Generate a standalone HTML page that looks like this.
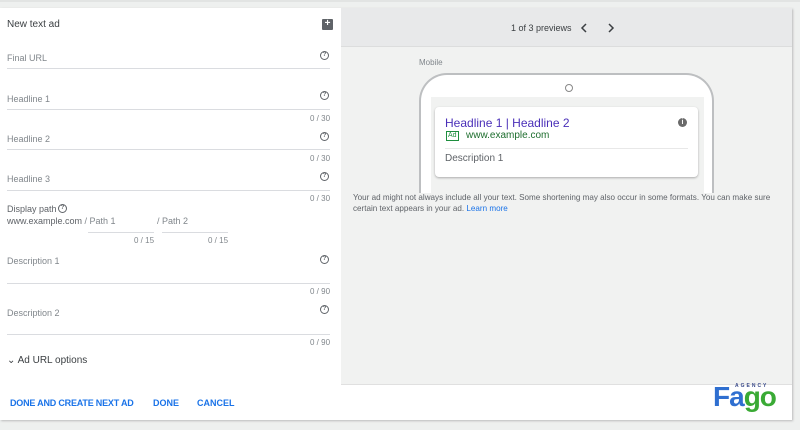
<!DOCTYPE html>
<html><head><style>
*{margin:0;padding:0;box-sizing:border-box}
body{width:800px;height:430px;background:#eef0ef;font-family:"Liberation Sans",sans-serif;position:relative;overflow:hidden}
.a{position:absolute}
.lbl{font-size:9px;color:#80868b}
.q{width:9px;height:9px;border:1px solid #5f6368;border-radius:50%;font-size:6px;line-height:7px;text-align:center;color:#5f6368;font-weight:bold}
.ln{height:1px;background:#dadce0}
.cnt{font-size:8px;color:#80868b}
.btn{font-size:9px;color:#1a73e8;font-weight:bold;top:398px}
</style></head><body>
<div class="a" style="left:0;top:0;width:800px;height:2px;background:#e2e4e3"></div>
<div class="a" style="left:0;top:8px;width:792px;height:412px;background:#fff;box-shadow:1px 1px 2px #bbb"></div>
<div class="a" style="left:341px;top:8px;width:451px;height:377px;background:#f1f2f1"></div>
<div class="a" style="left:341px;top:8px;width:451px;height:39px;background:#e8e9ea;border-bottom:1px solid #dcdddd"></div>
<div class="a" style="left:341px;top:384px;width:451px;height:1px;background:#e0e0e0"></div>

<div class="a" style="left:7px;top:19px;font-size:10px;color:#3c4043">New text ad</div>
<div class="a" style="left:322px;top:19px;width:11px;height:11px;background:#5f6368;border-radius:1px;color:#fff;font-size:10px;line-height:10px;text-align:center;font-weight:bold">+</div>

<div class="a lbl" style="left:7px;top:53px">Final URL</div>
<div class="a q" style="left:320px;top:51px">?</div>
<div class="a ln" style="left:7px;top:68px;width:323px"></div>

<div class="a lbl" style="left:7px;top:94px">Headline 1</div>
<div class="a q" style="left:320px;top:91px">?</div>
<div class="a ln" style="left:7px;top:109px;width:323px"></div>
<div class="a cnt" style="left:310px;top:114px">0 / 30</div>

<div class="a lbl" style="left:7px;top:134px">Headline 2</div>
<div class="a q" style="left:320px;top:132px">?</div>
<div class="a ln" style="left:7px;top:149px;width:323px"></div>
<div class="a cnt" style="left:310px;top:154px">0 / 30</div>

<div class="a lbl" style="left:7px;top:174px">Headline 3</div>
<div class="a q" style="left:320px;top:172px">?</div>
<div class="a ln" style="left:7px;top:190px;width:323px"></div>
<div class="a cnt" style="left:310px;top:194px">0 / 30</div>

<div class="a" style="left:7px;top:204px;font-size:9px;color:#5f6368">Display path</div>
<div class="a q" style="left:58px;top:204px">?</div>
<div class="a" style="left:7px;top:216px;font-size:9px;color:#5f6368">www.example.com <span style="color:#80868b">/ Path 1</span></div>
<div class="a lbl" style="left:157px;top:216px">/ Path 2</div>
<div class="a ln" style="left:88px;top:232px;width:66px"></div>
<div class="a ln" style="left:162px;top:232px;width:66px"></div>
<div class="a cnt" style="left:134px;top:236px">0 / 15</div>
<div class="a cnt" style="left:208px;top:236px">0 / 15</div>

<div class="a lbl" style="left:7px;top:256px">Description 1</div>
<div class="a q" style="left:320px;top:255px">?</div>
<div class="a ln" style="left:7px;top:283px;width:323px"></div>
<div class="a cnt" style="left:310px;top:287px">0 / 90</div>

<div class="a lbl" style="left:7px;top:308px">Description 2</div>
<div class="a q" style="left:320px;top:305px">?</div>
<div class="a ln" style="left:7px;top:334px;width:323px"></div>
<div class="a cnt" style="left:310px;top:338px">0 / 90</div>

<div class="a" style="left:7px;top:355px;font-size:10px;color:#3c4043">⌄ Ad URL options</div>

<div class="a btn" style="left:10px;letter-spacing:-0.2px">DONE AND CREATE NEXT AD</div>
<div class="a btn" style="left:153px">DONE</div>
<div class="a btn" style="left:197px">CANCEL</div>

<div class="a" style="left:735px;top:383px;font-size:5px;letter-spacing:2px;color:#3a4a8a;font-weight:bold">AGENCY</div>
<div class="a" style="left:713px;top:382px;font-size:28px;font-weight:bold;letter-spacing:-1px;line-height:30px"><span style="color:#2f6fd0">F</span><span style="color:#2f6fd0">a</span><span style="color:#3aaa35">go</span></div>

<div class="a" style="left:511px;top:23px;font-size:9px;color:#3c4043">1 of 3 previews</div>
<svg class="a" style="left:580px;top:22px" width="8" height="12"><path d="M6 2 L2 6 L6 10" fill="none" stroke="#3c4043" stroke-width="1.5"/></svg>
<svg class="a" style="left:607px;top:22px" width="8" height="12"><path d="M2 2 L6 6 L2 10" fill="none" stroke="#3c4043" stroke-width="1.5"/></svg>

<div class="a" style="left:419px;top:58px;font-size:8px;color:#80868b">Mobile</div>
<div class="a" style="left:419px;top:73px;width:295px;height:120px;border:2px solid #bdbfc1;border-bottom:none;border-radius:28px 28px 0 0;background:#fff;overflow:hidden">
  <div class="a" style="left:144px;top:9px;width:8px;height:8px;border:1px solid #888;border-radius:50%"></div>
  <div class="a" style="left:10px;top:22px;width:273px;height:110px;background:#f1f2f1"></div>
</div>
<div class="a" style="left:435px;top:107px;width:263px;height:70px;background:#fff;border-radius:4px;box-shadow:0 1px 2px #aaa"></div>
<div class="a" style="left:445px;top:116px;font-size:12px;color:#4a2fb8">Headline 1 | Headline 2</div>
<div class="a" style="left:678px;top:118px;width:9px;height:9px;border-radius:50%;background:#6a6a6a;color:#fff;font-size:7px;line-height:9px;text-align:center;font-weight:bold">i</div>
<div class="a" style="left:446px;top:131px;font-size:7px;color:#1e8e3e;border:1px solid #1e8e3e;padding:0 1px;line-height:8px">Ad</div>
<div class="a" style="left:466px;top:130px;font-size:10px;color:#1e6e2e">www.example.com</div>
<div class="a" style="left:445px;top:148px;width:243px;height:1px;background:#e8e8e8"></div>
<div class="a" style="left:445px;top:153px;font-size:10px;color:#5f6368">Description 1</div>
<div class="a" style="left:353px;top:193px;width:430px;font-size:8.1px;color:#5f6368;line-height:10.5px">Your ad might not always include all your text. Some shortening may also occur in some formats. You can make sure certain text appears in your ad. <span style="color:#1a73e8">Learn more</span></div>
</body></html>
